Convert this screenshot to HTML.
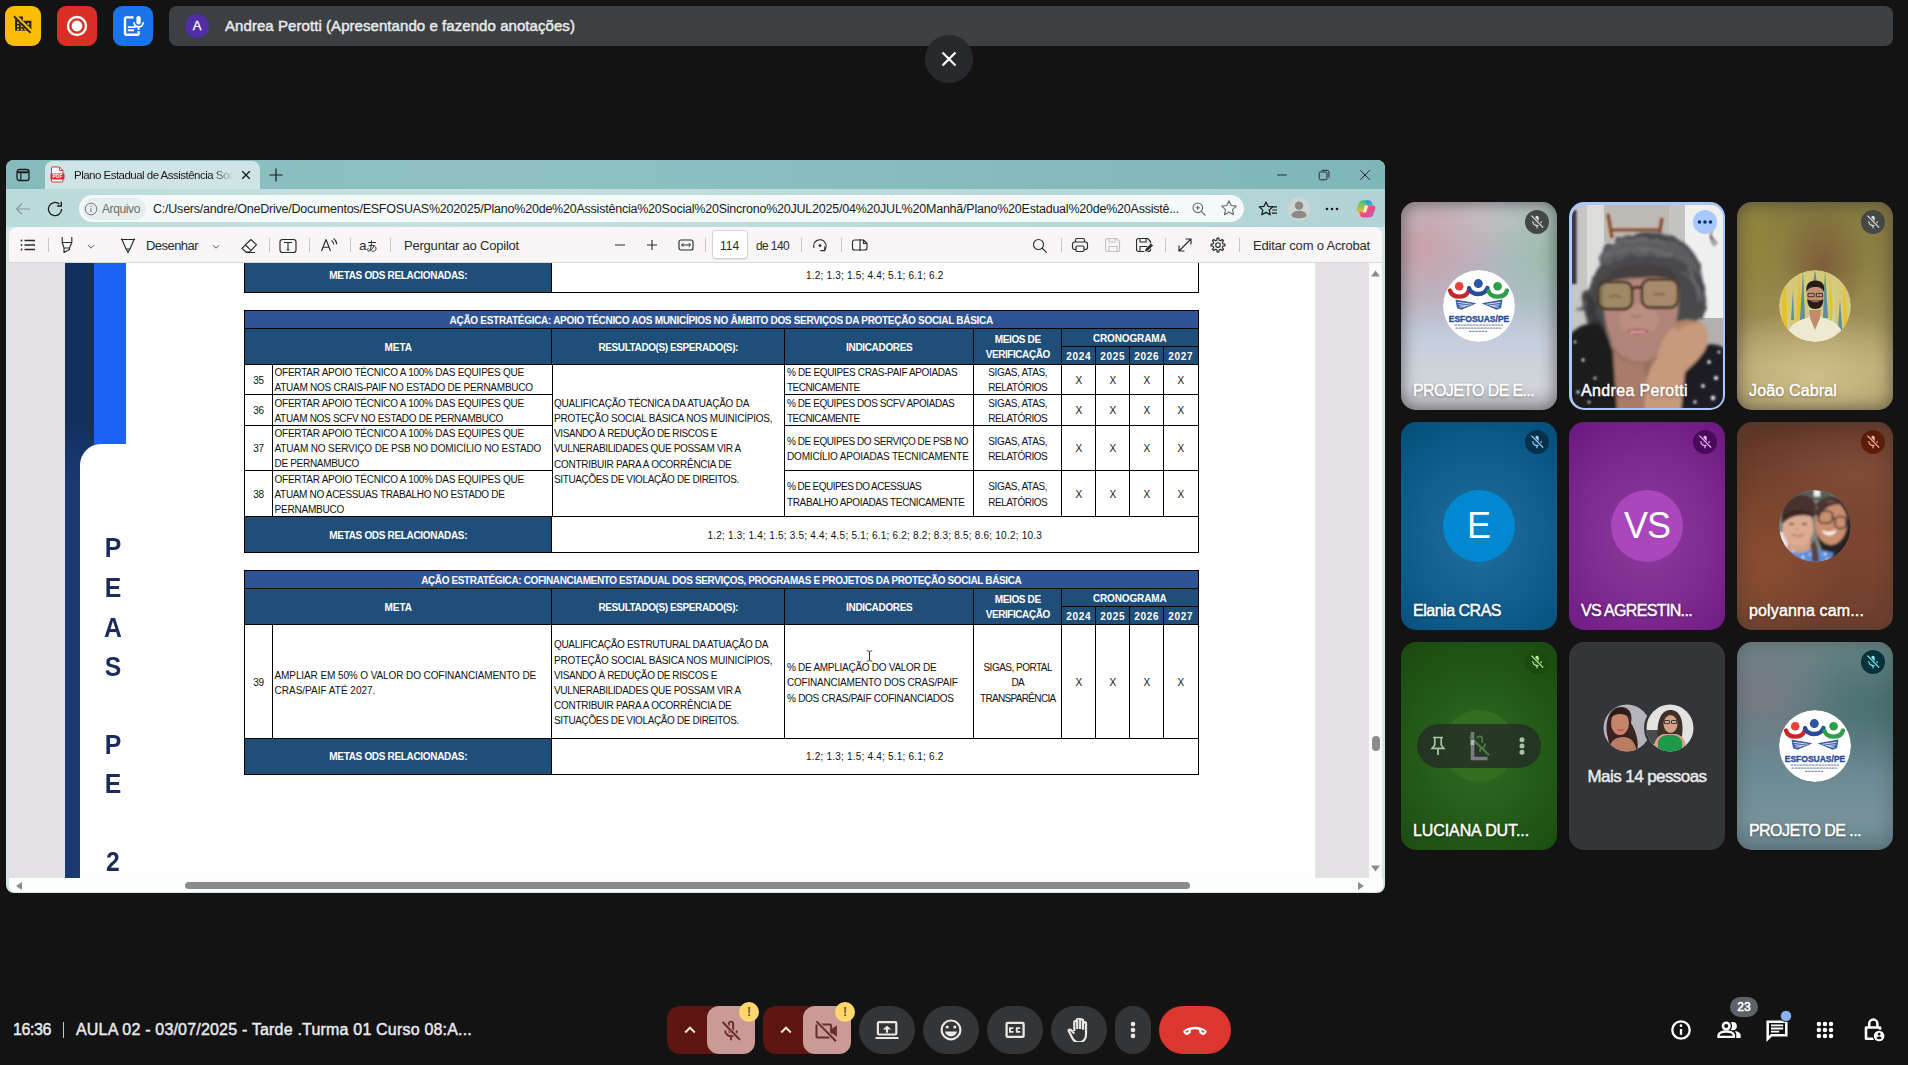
<!DOCTYPE html>
<html lang="pt-BR">
<head>
<meta charset="utf-8">
<title>Meet</title>
<style>
*{box-sizing:border-box;margin:0;padding:0}
html,body{width:1908px;height:1065px;overflow:hidden;background:#131314;font-family:"Liberation Sans",sans-serif;}
.abs{position:absolute}
.nw{white-space:nowrap}
/* ---------- top bar ---------- */
.sq{position:absolute;top:6px;height:40px;border-radius:9px}
#banner{position:absolute;left:169px;top:6px;width:1724px;height:40px;border-radius:8px;background:#3c4043}
#banner .av{position:absolute;left:16px;top:8px;width:24px;height:24px;border-radius:50%;background:#512da8;color:#fff;font-size:13px;font-weight:400;-webkit-text-stroke:.3px #fff;text-align:center;line-height:24.5px}
#banner .t{position:absolute;left:56px;top:0;line-height:40px;color:#e8eaed;font-weight:400;-webkit-text-stroke:.45px #e8eaed;font-size:15px;letter-spacing:0.063px;white-space:nowrap}
#closebtn{position:absolute;left:925px;top:35px;width:48px;height:48px;border-radius:50%;background:#28292c}
/* ---------- browser window ---------- */
#win{position:absolute;left:6px;top:160px;width:1379px;height:733px;border-radius:8px;overflow:hidden;background:#d2e8e5}
#tabstrip{position:absolute;left:0;top:0;width:1379px;height:30px;background:linear-gradient(90deg,#86babd 0%,#8fc1c2 35%,#7fb6ba 100%)}
#tab{position:absolute;left:39px;top:1px;width:215px;height:29px;border-radius:8px 8px 0 0;background:#cfe4e4}
#addr{position:absolute;left:0;top:29px;width:1379px;height:38px;background:linear-gradient(90deg,#bcdadb 0%,#c6e0e0 30%,#b1d3d6 100%)}
#pill{position:absolute;left:73px;top:6px;width:1165px;height:27px;border-radius:14px;background:#f4fafa}
#ptool{position:absolute;left:3px;top:67px;width:1373px;height:36px;background:#f8f6f6;border-radius:8px 8px 0 0;border-bottom:1px solid #d9d9d9}
#pdf{position:absolute;left:3px;top:103px;width:1373px;height:615px;background:#e4e2e4;overflow:hidden}
#page{position:absolute;left:56px;top:0;width:1250px;height:615px;background:#fefefe}
#hsb{position:absolute;left:2.500px;top:718px;width:1374px;height:13.500px;background:#fcfdfd;border-radius:0 0 6px 6px}
/* ---------- table ---------- */
  .c{position:absolute;border:1px solid #000;font-size:10px;color:#111;line-height:15.2px;display:flex;align-items:center;padding:1px 2px 0 2px;white-space:nowrap;background:#fff}
.c.ctr{justify-content:center;text-align:center}
.h{background:#1f4e79;color:#fff;font-weight:700;justify-content:center;text-align:center}
.h2{background:#2f5496;color:#fff;font-weight:700;justify-content:center;text-align:center}
.ltr{left:27.5px;width:40px;text-align:center;font-size:27.5px;font-weight:700;color:#1b2b5e;line-height:34px;transform:scaleX(.9)}
/* ---------- tiles ---------- */
.tile{position:absolute;width:156px;height:208px;border-radius:15px;overflow:hidden}
.gs{-webkit-text-stroke:.45px currentColor}
.tile .nm{position:absolute;left:12px;top:177px;line-height:24px;font-size:16px;font-weight:400;-webkit-text-stroke:.45px #fff;color:#fff;white-space:nowrap;text-shadow:0 1px 3px rgba(0,0,0,.5)}
.vig{position:absolute;left:0;top:0;right:0;bottom:0;border-radius:15px;box-shadow:inset 0 0 14px 3px rgba(60,60,60,.55)}
.mic{position:absolute;right:8px;top:8px;width:24px;height:24px;border-radius:50%}
.avc{position:absolute;left:42px;top:68px;width:72px;height:72px;border-radius:50%;overflow:hidden}
/* ---------- bottom bar ---------- */
.bb{position:absolute;top:1006px;height:48px;border-radius:24px;background:#333537}
.bt{position:absolute;top:1018px;line-height:24px;font-size:16px;font-weight:400;color:#e8eaed;white-space:nowrap}
</style>
</head>
<body>
<!-- TOPBAR -->
<div id="topbar">
<div class="sq" style="left:5px;width:36px;background:#fbbc04"></div>
<div class="sq" style="left:57px;width:40px;background:#d93025"></div>
<div class="sq" style="left:113px;width:40px;background:#1a73e8"></div>
<div id="banner"><div class="av">A</div><div class="t">Andrea Perotti (Apresentando e fazendo anotações)</div></div>
<div id="closebtn"><svg width="48" height="48" viewBox="0 0 48 48"><path d="M17.500 17.500l13 13M30.500 17.500l-13 13" stroke="#fff" stroke-width="2.200"/></svg>
</div>
<svg class="abs" style="left:5px;top:6px" width="36" height="40" viewBox="0 0 36 40">
<path d="M10.100 10.400h7.800v4.350h8.500v10.050h-16.300z" fill="#202124"/>
<g fill="#fbbc04"><rect x="12" y="15.900" width="1.900" height="1.900"/><rect x="12" y="19.300" width="1.900" height="1.900"/><rect x="12" y="22.600" width="1.900" height="1.700"/><rect x="15.700" y="19.300" width="1.900" height="1.900"/><rect x="15.700" y="22.600" width="1.900" height="1.700"/><rect x="19.400" y="22.600" width="1.900" height="1.700"/><rect x="22.300" y="16.900" width="1.900" height="1.900"/><rect x="22.600" y="20.300" width="1.800" height="1.800"/></g>
<path d="M9.600 9.400L27 27" stroke="#fbbc04" stroke-width="4"/>
<path d="M9 10.300L25.600 26.800" stroke="#202124" stroke-width="1.900"/>
</svg>
<svg class="abs" style="left:57px;top:6px" width="40" height="40" viewBox="0 0 40 40">
<circle cx="20" cy="20" r="9" fill="none" stroke="#fff" stroke-width="2.300"/><circle cx="20" cy="20" r="5.400" fill="#fff"/>
</svg>
<svg class="abs" style="left:113px;top:6px" width="40" height="40" viewBox="0 0 40 40" fill="none" stroke="#fff">
<path d="M20.500 11.400h-7.200a1.300 1.300 0 0 0-1.300 1.300v14.800a1.300 1.300 0 0 0 1.300 1.300h11a1.300 1.300 0 0 0 1.300-1.300v-2.200" stroke-width="2.400"/>
<path d="M14.800 21.100h8M14.800 24.300h6.200" stroke-width="1.900"/>
<rect x="23.400" y="10" width="4.300" height="8.600" rx="2.150" fill="#fff" stroke="none"/>
<path d="M20.900 16.300a4.650 4.650 0 0 0 9.300 0M25.550 21v3" stroke-width="1.800"/>
</svg>

</div>
<!-- WINDOW -->
<div id="win">
<div id="tabstrip"><div id="tab"><svg class="abs" style="left:5.1px;top:5.0px" width="15" height="17" viewBox="0 0 15 17" fill="none" ><path d="M2.500 1h7l3.500 3.500v10.500a1 1 0 0 1-1 1h-9.500a1 1 0 0 1-1-1v-13a1 1 0 0 1 1-1z" fill="#fff" stroke="#b33" stroke-width="0.900"/><path d="M9.500 1v3.500h3.500" stroke="#b33" stroke-width="0.900"/><rect x="0.500" y="7.500" width="14" height="6" rx="1" fill="#e5252a"/><text x="7.500" y="12.300" font-family="Liberation Sans" font-weight="700" font-size="5" fill="#fff" text-anchor="middle">PDF</text></svg>
<div class="abs nw" style="left:29.0px;top:5.7px;line-height:17.2px;font-size:11.5px;color:#1b1b1b;font-weight:400;letter-spacing:-0.518px;-webkit-mask-image:linear-gradient(90deg,#000 86%,transparent 100%);">Plano Estadual de Assistência Soc</div>
<svg class="abs" style="left:196.0px;top:9.0px" width="10" height="10" viewBox="0 0 10 10" fill="none" ><path d="M1.200 1.200l7.600 7.600M8.800 1.200l-7.600 7.600" stroke="#1b1b1b" stroke-width="1.300"/></svg>
</div><svg class="abs" style="left:8.7px;top:6.6px" width="16" height="16" viewBox="0 0 16 16" fill="none" ><rect x="2" y="2.500" width="12" height="11" rx="2.200" stroke="#1b1b1b" stroke-width="1.300"/><path d="M2.500 5.200h11" stroke="#1b1b1b" stroke-width="2"/><path d="M5.800 5.500v7.500" stroke="#1b1b1b" stroke-width="1.100"/></svg>
<svg class="abs" style="left:262.0px;top:7.0px" width="16" height="16" viewBox="0 0 16 16" fill="none" ><path d="M8 1.500v13M1.500 8h13" stroke="#1b1b1b" stroke-width="1.200"/></svg>
<svg class="abs" style="left:1269.0px;top:7.6px" width="14" height="14" viewBox="0 0 14 14" fill="none" ><path d="M2.200 7h9.600" stroke="#2a2a2a" stroke-width="1"/></svg>
<svg class="abs" style="left:1310.6px;top:8.3px" width="14" height="14" viewBox="0 0 14 14" fill="none" ><rect x="2.200" y="4" width="7.800" height="7.800" rx="1.200" stroke="#2a2a2a" stroke-width="1"/><path d="M4.500 2.300h5.500a2 2 0 0 1 2 2v5.500" stroke="#2a2a2a" stroke-width="1"/></svg>
<svg class="abs" style="left:1352.3px;top:8.3px" width="14" height="14" viewBox="0 0 14 14" fill="none" ><path d="M2.200 2.200l9.600 9.600M11.800 2.200l-9.600 9.600" stroke="#2a2a2a" stroke-width="1"/></svg>
</div>
<div id="addr"><div id="pill"><div class="abs" style="left:4px;top:2.5px;width:63px;height:22px;border-radius:11px;background:#e6efef"></div>
<svg class="abs" style="left:5.0px;top:6.8px" width="14" height="14" viewBox="0 0 14 14" fill="none" ><circle cx="7" cy="7" r="5.800" stroke="#7b7b7b" stroke-width="1"/><path d="M7 6.200v4" stroke="#7b7b7b" stroke-width="1.100"/><circle cx="7" cy="4.300" r=".7" fill="#7b7b7b"/></svg>
<div class="abs nw" style="left:23.0px;top:5.3px;line-height:18.0px;font-size:12px;color:#6e6e6e;font-weight:400;letter-spacing:-0.384px;">Arquivo</div>
<div class="abs nw" style="left:74.0px;top:4.9px;line-height:18.8px;font-size:12.5px;color:#1b1b1b;font-weight:400;letter-spacing:-0.223px;">C:/Users/andre/OneDrive/Documentos/ESFOSUAS%202025/Plano%20de%20Assistência%20Social%20Sincrono%20JUL2025/04%20JUL%20Manhã/Plano%20Estadual%20de%20Assistê...</div>
<svg class="abs" style="left:1112.0px;top:5.5px" width="16" height="16" viewBox="0 0 16 16" fill="none" ><circle cx="6.800" cy="6.800" r="4.800" stroke="#6a6a6a" stroke-width="1.100"/><path d="M10.300 10.300l4.200 4.200M4.600 6.800h4.400M6.800 4.600v4.400" stroke="#6a6a6a" stroke-width="1.100"/></svg>
<svg class="abs" style="left:1140.5px;top:4.3px" width="18" height="18" viewBox="0 0 18 18" fill="none" ><path d="M9 1.800l2.200 4.700 5.100.600-3.800 3.500 1 5.100-4.500-2.600-4.500 2.600 1-5.100-3.800-3.500 5.100-.600z" stroke="#6a6a6a" stroke-width="1.100" stroke-linejoin="round"/></svg>
</div><svg class="abs" style="left:7.5px;top:10.5px" width="18" height="18" viewBox="0 0 18 18" fill="none" ><path d="M16 9h-13.500M8 3.500l-5.500 5.500 5.500 5.500" stroke="#8a9a9c" stroke-width="1.200"/></svg>
<svg class="abs" style="left:40.0px;top:10.5px" width="18" height="18" viewBox="0 0 18 18" fill="none" ><path d="M15.600 9a6.600 6.600 0 1 1-2.200-4.900" stroke="#1b1b1b" stroke-width="1.300"/><path d="M15.300 1.800v4.200h-4.200" stroke="#1b1b1b" stroke-width="1.300"/></svg>
<svg class="abs" style="left:1251.5px;top:9.5px" width="20" height="20" viewBox="0 0 20 20" fill="none" ><path d="M8 3l2 4.300 4.700.600-3.500 3.200 1 4.700-4.200-2.400-4.200 2.400 1-4.700-3.500-3.200 4.700-.600z" stroke="#1b1b1b" stroke-width="1.250" stroke-linejoin="round"/><path d="M13.500 7.800h5.500M14.300 11h4.700M13.800 14.200h5.200" stroke="#1b1b1b" stroke-width="1.200"/></svg>
<svg class="abs" style="left:1281.4px;top:8.0px" width="24" height="24" viewBox="0 0 24 24" fill="none" ><circle cx="12" cy="12" r="11.500" fill="#cbd6d5"/><circle cx="12" cy="8.600" r="4.200" fill="#8d8984"/><path d="M4.500 18.500c0-3.200 3.200-4.800 7.500-4.800s7.500 1.600 7.500 4.800c0 1.600-3.200 2.700-7.500 2.700s-7.500-1.100-7.500-2.700z" fill="#8d8984"/></svg>
<svg class="abs" style="left:1317.7px;top:16.8px" width="16" height="6" viewBox="0 0 16 6" fill="none" ><circle cx="3" cy="3" r="1.300" fill="#1b1b1b"/><circle cx="8" cy="3" r="1.300" fill="#1b1b1b"/><circle cx="13" cy="3" r="1.300" fill="#1b1b1b"/></svg>
<svg class="abs" style="left:1348.8px;top:8.5px" width="22" height="22" viewBox="0 0 22 22" fill="none" ><defs><linearGradient id="cg1" x1="0" y1="0" x2="1" y2="1"><stop offset="0" stop-color="#2a7df0"/><stop offset="1" stop-color="#37c6d0"/></linearGradient><linearGradient id="cg2" x1="0" y1="0" x2="0" y2="1"><stop offset="0" stop-color="#35c27a"/><stop offset="1" stop-color="#f2c230"/></linearGradient><linearGradient id="cg3" x1="0" y1="0" x2="1" y2="1"><stop offset="0" stop-color="#f59a3a"/><stop offset="0.500" stop-color="#ef4a73"/><stop offset="1" stop-color="#b45ff0"/></linearGradient></defs>
<path d="M7.500 2.500h6.500c1.500 0 2.500 1 3 2.500l1 3.500h-4l-2 6h-8c-2 0-2.800-1.500-2.200-3.500l2.200-6c.6-1.600 1.800-2.500 3.500-2.500z" fill="url(#cg2)"/>
<path d="M8 2.500h6c1.500 0 2.600 1 3 2.500l1 3.500h-5.500l-1.500-3.500c-.5-1.500-1.500-2.500-3-2.500z" fill="url(#cg1)"/>
<path d="M14.500 19.500h-6.500c-1.500 0-2.500-1-3-2.500l-1-3.500h4l2-6h8c2 0 2.800 1.500 2.200 3.500l-2.200 6c-.6 1.600-1.800 2.500-3.500 2.500z" fill="url(#cg3)"/>
<path d="M9.800 7.500h3.400l-2 7h-3.400z" fill="#fff" opacity=".85"/></svg>
</div>
<div id="ptool"><svg class="abs" style="left:11.4px;top:11.0px" width="16" height="14" viewBox="0 0 16 14" fill="none" ><path d="M4.500 2.500h10.500M4.500 7h10.500M4.500 11.500h10.500" stroke="#2b2b2b" stroke-width="1.300"/><circle cx="1.500" cy="2.500" r=".9" fill="#2b2b2b"/><circle cx="1.500" cy="7" r=".9" fill="#2b2b2b"/><circle cx="1.500" cy="11.500" r=".9" fill="#2b2b2b"/></svg>
<div class="abs" style="left:39.3px;top:11px;width:1px;height:14px;background:#c9c7c7"></div>
<svg class="abs" style="left:50.0px;top:9.0px" width="16" height="18" viewBox="0 0 16 18" fill="none" ><path d="M3.200 1v5.500l1.800 5.500v4.500l5.500-3v-1.500l2.300-5.500v-5.500M3.200 6.500h9.600M5 12h5.500" stroke="#2b2b2b" stroke-width="1.150" stroke-linejoin="round"/></svg>
<svg class="abs" style="left:77.6px;top:16.5px" width="8" height="6" viewBox="0 0 8 6" fill="none" ><path d="M1 1.200l3 3 3-3" stroke="#555" stroke-width="1"/></svg>
<svg class="abs" style="left:110.5px;top:9.0px" width="16" height="18" viewBox="0 0 16 18" fill="none" ><path d="M1.500 2.500l4.500 10.500h4l4.500-10.500M1 3.500h14M6.200 13h3.600l-1.800 3.500z" stroke="#2b2b2b" stroke-width="1.150" stroke-linejoin="round"/></svg>
<div class="abs nw" style="left:137.0px;top:9.1px;line-height:19.5px;font-size:13px;color:#2b2b2b;font-weight:400;letter-spacing:-0.547px;">Desenhar</div>
<svg class="abs" style="left:203.0px;top:16.5px" width="8" height="6" viewBox="0 0 8 6" fill="none" ><path d="M1 1.200l3 3 3-3" stroke="#555" stroke-width="1"/></svg>
<svg class="abs" style="left:230.5px;top:10.5px" width="18" height="16" viewBox="0 0 18 16" fill="none" ><path d="M10.800 1.500l5.700 5.200-7 7.300h-3.600l-3.900-3.700z" stroke="#2b2b2b" stroke-width="1.150" stroke-linejoin="round"/><path d="M5.500 7l5 4.800M6 14.500h9" stroke="#2b2b2b" stroke-width="1.150"/></svg>
<div class="abs" style="left:259.7px;top:11px;width:1px;height:14px;background:#c9c7c7"></div>
<svg class="abs" style="left:270.0px;top:10.5px" width="18" height="16" viewBox="0 0 18 16" fill="none" ><rect x="1" y="1.500" width="16" height="13" rx="2.500" stroke="#2b2b2b" stroke-width="1.150"/><path d="M5.500 5v-.5h7v.5M9 4.500v7.500M7.500 12h3" stroke="#2b2b2b" stroke-width="1.100"/></svg>
<div class="abs" style="left:300.0px;top:11px;width:1px;height:14px;background:#c9c7c7"></div>
<svg class="abs" style="left:311.0px;top:10.0px" width="18" height="16" viewBox="0 0 18 16" fill="none" ><path d="M1.500 14l4.500-11.500 4.500 11.500M3 10.200h6" stroke="#2b2b2b" stroke-width="1.150" stroke-linejoin="round"/><path d="M11.500 3.500a5 5 0 0 1 2.200 4M13.500 1.500a8 8 0 0 1 3.300 5.800" stroke="#2b2b2b" stroke-width="1.100"/></svg>
<div class="abs" style="left:340.7px;top:11px;width:1px;height:14px;background:#c9c7c7"></div>
<div class="abs nw" style="left:350px;top:9.5px;font-size:13.5px;line-height:18px;color:#2b2b2b">a</div>
<svg class="abs" style="left:355.5px;top:12.0px" width="14" height="14" viewBox="0 0 14 14" fill="none" ><path d="M3 3.500h8M6.500 1.500c0 4-.5 7.500-1.500 10M3.500 7c3.500-1.500 7.500-.5 7.500 2.500s-3 3-4.500 2.500M9 6c-.5 3-2.500 5-5 6c-1.500.5-2-1.500-.5-3" stroke="#2b2b2b" stroke-width="1"/></svg>
<div class="abs" style="left:381.0px;top:11px;width:1px;height:14px;background:#c9c7c7"></div>
<div class="abs nw" style="left:395.0px;top:9.1px;line-height:19.5px;font-size:13px;color:#2b2b2b;font-weight:400;letter-spacing:-0.212px;">Perguntar ao Copilot</div>
<svg class="abs" style="left:605.0px;top:12.0px" width="12" height="12" viewBox="0 0 12 12" fill="none" ><path d="M1 6h10" stroke="#2b2b2b" stroke-width="1.100"/></svg>
<svg class="abs" style="left:637.0px;top:12.0px" width="12" height="12" viewBox="0 0 12 12" fill="none" ><path d="M1 6h10M6 1v10" stroke="#2b2b2b" stroke-width="1.100"/></svg>
<svg class="abs" style="left:669.0px;top:12.3px" width="16" height="12" viewBox="0 0 16 12" fill="none" ><rect x="1" y="1" width="14" height="10" rx="2" stroke="#2b2b2b" stroke-width="1.150"/><path d="M3.500 6h9M5.300 4.200l-1.800 1.800 1.800 1.800M10.700 4.200l1.800 1.800-1.800 1.800" stroke="#2b2b2b" stroke-width="1"/></svg>
<div class="abs" style="left:702.5px;top:2.500px;width:36px;height:29.500px;border:1px solid #d6d3d3;border-radius:4px;background:#fff;box-shadow:0 1px 1px rgba(0,0,0,.08);font-size:12px;line-height:30px;text-align:center;color:#2b2b2b">114</div>
<div class="abs nw" style="left:747.0px;top:9.8px;line-height:18.0px;font-size:12px;color:#2b2b2b;font-weight:400;letter-spacing:-0.617px;">de 140</div>
<div class="abs" style="left:696.0px;top:11px;width:1px;height:14px;background:#c9c7c7"></div>
<div class="abs" style="left:792.0px;top:11px;width:1px;height:14px;background:#c9c7c7"></div>
<svg class="abs" style="left:802.0px;top:9.5px" width="18" height="18" viewBox="0 0 18 18" fill="none" ><path d="M3 10.800A6.200 6.200 0 1 1 13.300 13.300" stroke="#2b2b2b" stroke-width="1.150"/><path d="M13.800 9.200v4.400h-4.400" stroke="#2b2b2b" stroke-width="1.150" stroke-linejoin="round"/><circle cx="9" cy="8.600" r="1.400" fill="#2b2b2b"/></svg>
<div class="abs" style="left:831.5px;top:11px;width:1px;height:14px;background:#c9c7c7"></div>
<svg class="abs" style="left:842.0px;top:11.3px" width="18" height="14" viewBox="0 0 18 14" fill="none" ><path d="M9 2h-5.500a2 2 0 0 0-2 2v6a2 2 0 0 0 2 2h5.500M9 1v12" stroke="#2b2b2b" stroke-width="1.150"/><path d="M9 2h3.500l3.500 3.500v4.500a2 2 0 0 1-2 2h-5M12.500 2v3.500h3.500" stroke="#2b2b2b" stroke-width="1.150" stroke-linejoin="round"/></svg>
<svg class="abs" style="left:1023.0px;top:10.5px" width="16" height="16" viewBox="0 0 16 16" fill="none" ><circle cx="6.500" cy="6.500" r="5" stroke="#2b2b2b" stroke-width="1.150"/><path d="M10.200 10.200l4.500 4.500" stroke="#2b2b2b" stroke-width="1.200"/></svg>
<div class="abs" style="left:1051.6px;top:11px;width:1px;height:14px;background:#c9c7c7"></div>
<svg class="abs" style="left:1062.4px;top:10.3px" width="18" height="16" viewBox="0 0 18 16" fill="none" ><path d="M4.500 5v-2a1.500 1.500 0 0 1 1.500-1.500h6a1.500 1.500 0 0 1 1.500 1.500v2" stroke="#2b2b2b" stroke-width="1.200"/><rect x="1.500" y="5" width="15" height="7.500" rx="2.200" stroke="#2b2b2b" stroke-width="1.200"/><rect x="5" y="9" width="8" height="5.500" rx="1.200" fill="#f8f6f6" stroke="#2b2b2b" stroke-width="1.200"/></svg>
<svg class="abs" style="left:1095.7px;top:10.3px" width="16" height="16" viewBox="0 0 16 16" fill="none" ><path d="M2.500 1.500h9l3 3v8a2 2 0 0 1-2 2h-10a2 2 0 0 1-2-2v-9a2 2 0 0 1 2-2z" stroke="#c4c2c2" stroke-width="1.200" stroke-linejoin="round"/><path d="M4 1.500v3.500h6v-3.500M4 14.500v-5h8v5" stroke="#c4c2c2" stroke-width="1.100"/></svg>
<svg class="abs" style="left:1127.0px;top:10.3px" width="18" height="16" viewBox="0 0 18 16" fill="none" ><path d="M2.500 1.500h9l3 3v8a2 2 0 0 1-2 2h-10a2 2 0 0 1-2-2v-9a2 2 0 0 1 2-2z" stroke="#2b2b2b" stroke-width="1.200" stroke-linejoin="round"/><path d="M4 1.500v3.500h6v-3.500M4 14.500v-5h8v5" stroke="#2b2b2b" stroke-width="1.100"/><path d="M8.500 15l.7-3 5.800-5.800 2.300 2.300-5.800 5.800z" fill="#2b2b2b" stroke="#f8f6f6" stroke-width=".8"/></svg>
<div class="abs" style="left:1156.0px;top:11px;width:1px;height:14px;background:#c9c7c7"></div>
<svg class="abs" style="left:1168.0px;top:10.3px" width="16" height="16" viewBox="0 0 16 16" fill="none" ><path d="M2 14l12-12M8.500 2h5.500v5.500M7.500 14h-5.500v-5.500" stroke="#2b2b2b" stroke-width="1.150"/></svg>
<svg class="abs" style="left:1199.6px;top:9.0px" width="18" height="18" viewBox="0 0 18 18" fill="none" ><path d="M7.83 4.14L8.07 2.06L9.93 2.06L10.17 4.14L11.61 4.74L13.25 3.44L14.56 4.75L13.26 6.39L13.86 7.83L15.94 8.07L15.94 9.93L13.86 10.17L13.26 11.61L14.56 13.25L13.25 14.56L11.61 13.26L10.17 13.86L9.93 15.94L8.07 15.94L7.83 13.86L6.39 13.26L4.75 14.56L3.44 13.25L4.74 11.61L4.14 10.17L2.06 9.93L2.06 8.07L4.14 7.83L4.74 6.39L3.44 4.75L4.75 3.44L6.39 4.74z" stroke="#2b2b2b" stroke-width="1.150" stroke-linejoin="round"/><circle cx="9" cy="9" r="2.300" stroke="#2b2b2b" stroke-width="1.150"/></svg>
<div class="abs" style="left:1229.5px;top:11px;width:1px;height:14px;background:#c9c7c7"></div>
<div class="abs nw" style="left:1244.0px;top:9.1px;line-height:19.5px;font-size:13px;color:#2b2b2b;font-weight:400;letter-spacing:-0.184px;">Editar com o Acrobat</div>
</div>
<div id="pdf"><div id="page">
<div class="abs" style="left:0;top:0;width:29px;height:181px;background:#12305e"></div>
<div class="abs" style="left:0;top:181px;width:16px;height:434px;background:#1b3a73"></div>
<div class="abs" style="left:0;top:160px;width:40px;height:60px;background:linear-gradient(180deg,#12305e,#1b3a73)"></div>
<div class="abs" style="left:29px;top:0;width:32px;height:182px;background:#1d62f7"></div>
<div class="abs" style="left:15px;top:181px;width:200px;height:434px;background:#fefefe;border-radius:21px 0 0 0"></div>
<div class="abs ltr" style="top:268px">P</div>
<div class="abs ltr" style="top:308px">E</div>
<div class="abs ltr" style="top:348px">A</div>
<div class="abs ltr" style="top:387px">S</div>
<div class="abs ltr" style="top:465px">P</div>
<div class="abs ltr" style="top:504px">E</div>
<div class="abs ltr" style="top:582px">2</div>
<div class="c h" style="left:179.0px;top:-8.7px;width:308.5px;height:39.0px;align-items:flex-start;padding-top:12.5px"><div><span style="letter-spacing:-0.325px">METAS ODS RELACIONADAS:</span></div></div>
<div class="c ctr" style="left:486.0px;top:-8.7px;width:647.5px;height:39.0px;align-items:flex-start;padding-top:12.5px"><div><span style="letter-spacing:0.207px">1.2; 1.3; 1.5; 4.4; 5.1; 6.1; 6.2</span></div></div>
<div class="c h2" style="left:179.0px;top:47.3px;width:954.5px;height:19.5px;"><div><span style="letter-spacing:-0.297px">AÇÃO ESTRATÉGICA: APOIO TÉCNICO AOS MUNICÍPIOS NO ÂMBITO DOS SERVIÇOS DA PROTEÇÃO SOCIAL BÁSICA</span></div></div>
<div class="c h" style="left:179.0px;top:65.3px;width:308.5px;height:37.0px;"><div><span style="letter-spacing:-0.023px">META</span></div></div>
<div class="c h" style="left:486.0px;top:65.3px;width:234.5px;height:37.0px;"><div><span style="letter-spacing:-0.406px">RESULTADO(S) ESPERADO(S):</span></div></div>
<div class="c h" style="left:719.0px;top:65.3px;width:190.5px;height:37.0px;"><div><span style="letter-spacing:-0.329px">INDICADORES</span></div></div>
<div class="c h" style="left:908.0px;top:65.3px;width:89.5px;height:37.0px;"><div><span style="letter-spacing:-0.338px">MEIOS DE</span><br><span style="letter-spacing:-0.428px">VERIFICAÇÃO</span></div></div>
<div class="c h" style="left:996.0px;top:65.3px;width:137.5px;height:19.5px;"><div><span style="letter-spacing:-0.13px">CRONOGRAMA</span></div></div>
<div class="c h" style="left:996.0px;top:83.3px;width:35.5px;height:19.0px;"><div><span style="letter-spacing:0.688px">2024</span></div></div>
<div class="c h" style="left:1030.0px;top:83.3px;width:35.5px;height:19.0px;"><div><span style="letter-spacing:0.688px">2025</span></div></div>
<div class="c h" style="left:1064.0px;top:83.3px;width:35.5px;height:19.0px;"><div><span style="letter-spacing:0.688px">2026</span></div></div>
<div class="c h" style="left:1098.0px;top:83.3px;width:35.5px;height:19.0px;"><div><span style="letter-spacing:0.688px">2027</span></div></div>
<div class="c " style="left:486.0px;top:100.8px;width:234.5px;height:154.0px;"><div><span style="letter-spacing:-0.233px">QUALIFICAÇÃO TÉCNICA DA ATUAÇÃO DA</span><br><span style="letter-spacing:-0.204px">PROTEÇÃO SOCIAL BÁSICA NOS MUINICÍPIOS,</span><br><span style="letter-spacing:-0.396px">VISANDO À REDUÇÃO DE RISCOS E</span><br><span style="letter-spacing:-0.335px">VULNERABILIDADES QUE POSSAM VIR A</span><br><span style="letter-spacing:-0.273px">CONTRIBUIR PARA A OCORRÊNCIA DE</span><br><span style="letter-spacing:-0.375px">SITUAÇÕES DE VIOLAÇÃO DE DIREITOS.</span></div></div>
<div class="c ctr" style="left:179.0px;top:100.8px;width:29.0px;height:32.0px;"><div><span style="letter-spacing:-0.312px">35</span></div></div>
<div class="c " style="left:206.5px;top:100.8px;width:281.0px;height:32.0px;"><div><span style="letter-spacing:-0.243px">OFERTAR APOIO TÉCNICO A 100% DAS EQUIPES QUE</span><br><span style="letter-spacing:-0.241px">ATUAM NOS CRAIS-PAIF NO ESTADO DE PERNAMBUCO</span></div></div>
<div class="c " style="left:719.0px;top:100.8px;width:190.5px;height:32.0px;"><div><span style="letter-spacing:-0.366px">% DE EQUIPES CRAS-PAIF APOIADAS</span><br><span style="letter-spacing:-0.526px">TECNICAMENTE</span></div></div>
<div class="c ctr" style="left:908.0px;top:100.8px;width:89.5px;height:32.0px;"><div><span style="letter-spacing:-0.332px">SIGAS, ATAS,</span><br><span style="letter-spacing:-0.472px">RELATÓRIOS</span></div></div>
<div class="c ctr" style="left:996.0px;top:100.8px;width:35.5px;height:32.0px;"><div>X</div></div>
<div class="c ctr" style="left:1030.0px;top:100.8px;width:35.5px;height:32.0px;"><div>X</div></div>
<div class="c ctr" style="left:1064.0px;top:100.8px;width:35.5px;height:32.0px;"><div>X</div></div>
<div class="c ctr" style="left:1098.0px;top:100.8px;width:35.5px;height:32.0px;"><div>X</div></div>
<div class="c ctr" style="left:179.0px;top:131.3px;width:29.0px;height:32.0px;"><div><span style="letter-spacing:-0.312px">36</span></div></div>
<div class="c " style="left:206.5px;top:131.3px;width:281.0px;height:32.0px;"><div><span style="letter-spacing:-0.243px">OFERTAR APOIO TÉCNICO A 100% DAS EQUIPES QUE</span><br><span style="letter-spacing:-0.306px">ATUAM NOS SCFV NO ESTADO DE PERNAMBUCO</span></div></div>
<div class="c " style="left:719.0px;top:131.3px;width:190.5px;height:32.0px;"><div><span style="letter-spacing:-0.429px">% DE EQUIPES DOS SCFV APOIADAS</span><br><span style="letter-spacing:-0.526px">TECNICAMENTE</span></div></div>
<div class="c ctr" style="left:908.0px;top:131.3px;width:89.5px;height:32.0px;"><div><span style="letter-spacing:-0.332px">SIGAS, ATAS,</span><br><span style="letter-spacing:-0.472px">RELATÓRIOS</span></div></div>
<div class="c ctr" style="left:996.0px;top:131.3px;width:35.5px;height:32.0px;"><div>X</div></div>
<div class="c ctr" style="left:1030.0px;top:131.3px;width:35.5px;height:32.0px;"><div>X</div></div>
<div class="c ctr" style="left:1064.0px;top:131.3px;width:35.5px;height:32.0px;"><div>X</div></div>
<div class="c ctr" style="left:1098.0px;top:131.3px;width:35.5px;height:32.0px;"><div>X</div></div>
<div class="c ctr" style="left:179.0px;top:161.8px;width:29.0px;height:47.0px;"><div><span style="letter-spacing:-0.312px">37</span></div></div>
<div class="c " style="left:206.5px;top:161.8px;width:281.0px;height:47.0px;"><div><span style="letter-spacing:-0.243px">OFERTAR APOIO TÉCNICO A 100% DAS EQUIPES QUE</span><br><span style="letter-spacing:-0.133px">ATUAM NO SERVIÇO DE PSB NO DOMICÍLIO NO ESTADO</span><br><span style="letter-spacing:-0.305px">DE PERNAMBUCO</span></div></div>
<div class="c " style="left:719.0px;top:161.8px;width:190.5px;height:47.0px;"><div><span style="letter-spacing:-0.431px">% DE EQUIPES DO SERVIÇO DE PSB NO</span><br><span style="letter-spacing:-0.173px">DOMICÍLIO APOIADAS TECNICAMENTE</span></div></div>
<div class="c ctr" style="left:908.0px;top:161.8px;width:89.5px;height:47.0px;"><div><span style="letter-spacing:-0.332px">SIGAS, ATAS,</span><br><span style="letter-spacing:-0.472px">RELATÓRIOS</span></div></div>
<div class="c ctr" style="left:996.0px;top:161.8px;width:35.5px;height:47.0px;"><div>X</div></div>
<div class="c ctr" style="left:1030.0px;top:161.8px;width:35.5px;height:47.0px;"><div>X</div></div>
<div class="c ctr" style="left:1064.0px;top:161.8px;width:35.5px;height:47.0px;"><div>X</div></div>
<div class="c ctr" style="left:1098.0px;top:161.8px;width:35.5px;height:47.0px;"><div>X</div></div>
<div class="c ctr" style="left:179.0px;top:207.3px;width:29.0px;height:47.5px;"><div><span style="letter-spacing:-0.312px">38</span></div></div>
<div class="c " style="left:206.5px;top:207.3px;width:281.0px;height:47.5px;"><div><span style="letter-spacing:-0.243px">OFERTAR APOIO TÉCNICO A 100% DAS EQUIPES QUE</span><br><span style="letter-spacing:-0.329px">ATUAM NO ACESSUAS TRABALHO NO ESTADO DE</span><br><span style="letter-spacing:-0.199px">PERNAMBUCO</span></div></div>
<div class="c " style="left:719.0px;top:207.3px;width:190.5px;height:47.5px;"><div><span style="letter-spacing:-0.544px">% DE EQUIPES DO ACESSUAS</span><br><span style="letter-spacing:-0.375px">TRABALHO APOIADAS TECNICAMENTE</span></div></div>
<div class="c ctr" style="left:908.0px;top:207.3px;width:89.5px;height:47.5px;"><div><span style="letter-spacing:-0.332px">SIGAS, ATAS,</span><br><span style="letter-spacing:-0.472px">RELATÓRIOS</span></div></div>
<div class="c ctr" style="left:996.0px;top:207.3px;width:35.5px;height:47.5px;"><div>X</div></div>
<div class="c ctr" style="left:1030.0px;top:207.3px;width:35.5px;height:47.5px;"><div>X</div></div>
<div class="c ctr" style="left:1064.0px;top:207.3px;width:35.5px;height:47.5px;"><div>X</div></div>
<div class="c ctr" style="left:1098.0px;top:207.3px;width:35.5px;height:47.5px;"><div>X</div></div>
<div class="c h" style="left:179.0px;top:253.3px;width:308.5px;height:37.0px;"><div><span style="letter-spacing:-0.325px">METAS ODS RELACIONADAS:</span></div></div>
<div class="c ctr" style="left:486.0px;top:253.3px;width:647.5px;height:37.0px;"><div><span style="letter-spacing:0.221px">1.2; 1.3; 1.4; 1.5; 3.5; 4.4; 4.5; 5.1; 6.1; 6.2; 8.2; 8.3; 8.5; 8.6; 10.2; 10.3</span></div></div>
<div class="c h2" style="left:179.0px;top:307.3px;width:954.5px;height:19.5px;"><div><span style="letter-spacing:-0.376px">AÇÃO ESTRATÉGICA: COFINANCIAMENTO ESTADUAL DOS SERVIÇOS, PROGRAMAS E PROJETOS DA PROTEÇÃO SOCIAL BÁSICA</span></div></div>
<div class="c h" style="left:179.0px;top:325.3px;width:308.5px;height:37.0px;"><div><span style="letter-spacing:-0.023px">META</span></div></div>
<div class="c h" style="left:486.0px;top:325.3px;width:234.5px;height:37.0px;"><div><span style="letter-spacing:-0.406px">RESULTADO(S) ESPERADO(S):</span></div></div>
<div class="c h" style="left:719.0px;top:325.3px;width:190.5px;height:37.0px;"><div><span style="letter-spacing:-0.329px">INDICADORES</span></div></div>
<div class="c h" style="left:908.0px;top:325.3px;width:89.5px;height:37.0px;"><div><span style="letter-spacing:-0.338px">MEIOS DE</span><br><span style="letter-spacing:-0.428px">VERIFICAÇÃO</span></div></div>
<div class="c h" style="left:996.0px;top:325.3px;width:137.5px;height:19.5px;"><div><span style="letter-spacing:-0.13px">CRONOGRAMA</span></div></div>
<div class="c h" style="left:996.0px;top:343.3px;width:35.5px;height:19.0px;"><div><span style="letter-spacing:0.688px">2024</span></div></div>
<div class="c h" style="left:1030.0px;top:343.3px;width:35.5px;height:19.0px;"><div><span style="letter-spacing:0.688px">2025</span></div></div>
<div class="c h" style="left:1064.0px;top:343.3px;width:35.5px;height:19.0px;"><div><span style="letter-spacing:0.688px">2026</span></div></div>
<div class="c h" style="left:1098.0px;top:343.3px;width:35.5px;height:19.0px;"><div><span style="letter-spacing:0.688px">2027</span></div></div>
<div class="c ctr" style="left:179.0px;top:360.8px;width:29.0px;height:115.5px;padding-top:3px"><div><span style="letter-spacing:-0.312px">39</span></div></div>
<div class="c " style="left:206.5px;top:360.8px;width:281.0px;height:115.5px;padding-top:3px"><div><span style="letter-spacing:-0.095px">AMPLIAR EM 50% O VALOR DO COFINANCIAMENTO DE</span><br><span style="letter-spacing:0.006px">CRAS/PAIF ATÉ 2027.</span></div></div>
<div class="c " style="left:486.0px;top:360.8px;width:234.5px;height:115.5px;padding-top:3px"><div><span style="letter-spacing:-0.326px">QUALIFICAÇÃO ESTRUTURAL DA ATUAÇÃO DA</span><br><span style="letter-spacing:-0.204px">PROTEÇÃO SOCIAL BÁSICA NOS MUINICÍPIOS,</span><br><span style="letter-spacing:-0.396px">VISANDO À REDUÇÃO DE RISCOS E</span><br><span style="letter-spacing:-0.335px">VULNERABILIDADES QUE POSSAM VIR A</span><br><span style="letter-spacing:-0.273px">CONTRIBUIR PARA A OCORRÊNCIA DE</span><br><span style="letter-spacing:-0.375px">SITUAÇÕES DE VIOLAÇÃO DE DIREITOS.</span></div></div>
<div class="c " style="left:719.0px;top:360.8px;width:190.5px;height:115.5px;padding-top:3px"><div><span style="letter-spacing:-0.274px">% DE AMPLIAÇÃO DO VALOR DE</span><br><span style="letter-spacing:-0.213px">COFINANCIAMENTO DOS CRAS/PAIF</span><br><span style="letter-spacing:-0.262px">% DOS CRAS/PAIF COFINANCIADOS</span></div></div>
<div class="c ctr" style="left:908.0px;top:360.8px;width:89.5px;height:115.5px;padding-top:3px"><div><span style="letter-spacing:-0.509px">SIGAS, PORTAL</span><br><span style="letter-spacing:-0.703px">DA</span><br><span style="letter-spacing:-0.668px">TRANSPARÊNCIA</span></div></div>
<div class="c ctr" style="left:996.0px;top:360.8px;width:35.5px;height:115.5px;padding-top:3px"><div>X</div></div>
<div class="c ctr" style="left:1030.0px;top:360.8px;width:35.5px;height:115.5px;padding-top:3px"><div>X</div></div>
<div class="c ctr" style="left:1064.0px;top:360.8px;width:35.5px;height:115.5px;padding-top:3px"><div>X</div></div>
<div class="c ctr" style="left:1098.0px;top:360.8px;width:35.5px;height:115.5px;padding-top:3px"><div>X</div></div>
<div class="c h" style="left:179.0px;top:474.8px;width:308.5px;height:37.0px;"><div><span style="letter-spacing:-0.325px">METAS ODS RELACIONADAS:</span></div></div>
<div class="c ctr" style="left:486.0px;top:474.8px;width:647.5px;height:37.0px;"><div><span style="letter-spacing:0.207px">1.2; 1.3; 1.5; 4.4; 5.1; 6.1; 6.2</span></div></div>

</div><div class="abs" style="left:1360px;top:0;width:13px;height:615px;background:#fbfbfb"></div>
<svg class="abs" style="left:1360px;top:6px" width="13" height="10" viewBox="0 0 13 10"><path d="M6.500 1.500l4.500 6h-9z" fill="#8c8c8c"/></svg>
<svg class="abs" style="left:1360px;top:600px" width="13" height="10" viewBox="0 0 13 10"><path d="M6.500 8.500l4.500-6h-9z" fill="#8c8c8c"/></svg>
<div class="abs" style="left:1363px;top:473px;width:8px;height:15px;border-radius:4px;background:#8c8c8c"></div>
</div>
<div id="hsb"><svg class="abs" style="left:5.500px;top:3px" width="10" height="10" viewBox="0 0 10 10"><path d="M2 5l6-4v8z" fill="#8c8c8c"/></svg><svg class="abs" style="left:1347px;top:3px" width="10" height="10" viewBox="0 0 10 10"><path d="M8 5l-6-4v8z" fill="#8c8c8c"/></svg><div class="abs" style="left:176.500px;top:3.500px;width:1004.500px;height:7.500px;border-radius:4px;background:#8b8b8b"></div></div>
</div>
<svg class="abs" style="left:866px;top:650px" width="7" height="12" viewBox="0 0 7 12" fill="none" stroke="#333" stroke-width="1"><path d="M.8 .9c1.500 0 2.200.2 2.700.8c.5-.6 1.200-.8 2.700-.8M.8 11.100c1.500 0 2.200-.2 2.700-.8c.5.600 1.200.8 2.700.8M3.500 1.500v9"/></svg>
<!-- TILES -->
<div id="tiles">
<div class="tile" style="left:1401px;top:202px;background:radial-gradient(ellipse 60% 40% at 12% 22%,rgba(203,160,168,.95),rgba(203,160,168,0) 100%),radial-gradient(ellipse 55% 40% at 100% 25%,rgba(150,190,165,.85),rgba(150,190,165,0) 100%),radial-gradient(ellipse 80% 30% at 50% 0%,rgba(200,200,205,1),rgba(200,200,205,0) 100%),linear-gradient(180deg,#b3b7c4 0%,#b4bccd 45%,#c8cfdd 70%,#d2d4da 88%,#b9b9bd 100%)"><div class="vig"></div><div class="avc"><svg width="72" height="72" viewBox="0 0 72 72" fill="none"><circle cx="36" cy="36" r="36" fill="#fff"/>
<circle cx="16.200" cy="16.200" r="4.300" fill="#e8413c"/><circle cx="35.300" cy="13.600" r="4.500" fill="#2f55a4"/><circle cx="54.600" cy="16.200" r="4.300" fill="#2e9e48"/>
<path d="M7 20.500c2.500 8.200 15.500 8.200 18.500 .5" stroke="#c62828" stroke-width="4.300" stroke-linecap="round"/>
<path d="M26 18c2.500 8 15.500 8 18.500 0" stroke="#2a4a9a" stroke-width="4.300" stroke-linecap="round"/>
<path d="M45.500 21c3 7.700 16 7.700 18.500-.5" stroke="#2e9e48" stroke-width="4.300" stroke-linecap="round"/>
<path d="M12.500 29.500l21 3.800-15 6.500-4.500-1.500z" fill="#3d5fa8"/><path d="M14.500 32.300l14 2M15.500 34.800l10 .8M16.500 37.200l6-.8" stroke="#fff" stroke-width=".8"/>
<path d="M59.500 29.500l-21 3.800 15 6.500 4.500-1.500z" fill="#3d5fa8"/><path d="M57.500 32.300l-14 2M56.500 34.800l-10 .8M55.500 37.200l-6-.8" stroke="#fff" stroke-width=".8"/>
<text x="36" y="51.700" text-anchor="middle" font-family="Liberation Sans" font-weight="700" font-size="8.800" fill="#2a4a9a" stroke="#2a4a9a" stroke-width=".35" textLength="60.500" lengthAdjust="spacingAndGlyphs">ESFOSUAS/PE</text>
<path d="M11.500 55.200h48.500M12.500 58.200h46M26 61.300h18" stroke="#8a96b0" stroke-width="1.200" stroke-dasharray="2.600 .5"/></svg></div><div class="mic" style="background:#444746"><svg width="24" height="24" viewBox="0 0 24 24" fill="none"><rect x="10.300" y="5.800" width="3.400" height="7.400" rx="1.700" fill="#dcdcdc"/><path d="M7.800 11.300a4.200 4.200 0 0 0 8.400 0M12 15.500v2.700" stroke="#dcdcdc" stroke-width="1.250"/><path d="M5.800 5.300l12.800 13" stroke="#444746" stroke-width="3"/><path d="M6.400 5.600l11.800 12" stroke="#dcdcdc" stroke-width="1.250"/></svg></div><div class="nm" style="letter-spacing:-0.627px">PROJETO DE E...</div></div>
<div class="tile" style="left:1569px;top:202px;background:#a8c7fa"><div class="abs" style="left:2.500px;top:2.500px;width:151px;height:203px;border-radius:12.500px;overflow:hidden"><div class="abs" style="left:-2.500px;top:-2.500px"><svg class="abs" style="left:0;top:0" width="156" height="208" viewBox="0 0 156 208">
<defs><filter id="b2" x="-10%" y="-10%" width="120%" height="120%"><feGaussianBlur stdDeviation="1.800"/></filter><filter id="b1" x="-10%" y="-10%" width="120%" height="120%"><feGaussianBlur stdDeviation=".9"/></filter><filter id="b3" x="-20%" y="-20%" width="140%" height="140%"><feGaussianBlur stdDeviation="3.200"/></filter>
<filter id="rg" x="-20%" y="-20%" width="140%" height="140%"><feTurbulence type="fractalNoise" baseFrequency="0.07" numOctaves="2" seed="7"/><feDisplacementMap in="SourceGraphic" scale="11"/><feGaussianBlur stdDeviation="1.600"/></filter>
<clipPath id="cc"><rect width="156" height="208"/></clipPath></defs>
<g clip-path="url(#cc)">
<rect width="156" height="208" fill="#cfcfcd"/>
<rect x="0" y="0" width="20" height="140" fill="#c6c6c4"/><rect x="18" y="0" width="18" height="140" fill="#dcdcda"/>
<rect x="35" y="0" width="66" height="40" fill="#bdb9b3"/><rect x="100" y="0" width="17" height="70" fill="#c4c4c2"/>
<rect x="116" y="0" width="40" height="118" fill="#eff0ef"/>
<rect x="116" y="116" width="40" height="40" fill="#b3b0ae"/>
<g filter="url(#b1)">
<path d="M39 12l4 24M93 16l-2.500 15M42 28h50" stroke="#8a4a2f" stroke-width="3.200" fill="none"/>
<rect x="2" y="8" width="5.500" height="74" fill="#3b3340"/>
<path d="M146 24c-6 6-6 14 0 20M142 34l6 8" stroke="#555" stroke-width="1.300" fill="none"/>
</g>
<g filter="url(#b2)">
<!-- hair back -->
</g><g filter="url(#rg)">
<path d="M14 96c4-8 10-12 12-22c2-24 22-44 52-44c34 0 52 18 56 46c2 10 6 18 2 28c-4 10-10 16-18 18l-84 24c-10-6-14-18-16-30c-2-6-6-12-4-20z" fill="#48494c"/>
<path d="M30 60c10-22 40-30 70-22c20 6 30 22 32 40c-10-18-30-26-56-24c-20 0-36 4-46 6z" fill="#5c5d61"/>
<path d="M112 70c10 4 20 16 22 30M20 100c-4 6-8 8-12 8" stroke="#5a5b5f" stroke-width="3" fill="none"/><path d="M44 44c14-8 34-10 52-4M36 56c16-10 44-12 70-2M118 64c8 10 12 22 12 36" stroke="#77787c" stroke-width="2.200" fill="none" stroke-opacity=".7"/><path d="M22 96c0 14 4 26 12 36" stroke="#38383b" stroke-width="7" fill="none"/>
</g><g filter="url(#b2)">
<path d="M40 140l50 10l10 58h-60z" fill="#9a7060"/>
<!-- face -->
<path d="M34 92c0-18 14-28 38-28s38 10 38 30c0 22-4 40-14 52c-8 10-16 14-26 14s-20-6-27-18c-6-12-9-30-9-50z" fill="#b08478"/>
<ellipse cx="70" cy="118" rx="20" ry="16" fill="#bb8e82"/>
<!-- fringe -->
<path d="M32 84c4-14 20-22 42-22c20 0 34 6 38 20c-12-6-24-8-40-6c-16 0-28 2-40 8z" fill="#454041"/>
<!-- neck / chest -->
<path d="M44 150c8 10 20 14 30 12l12 46h-44z" fill="#a87c68"/>
<!-- clothes -->
<path d="M0 208v-74c8-10 18-14 30-12c6 6 10 16 14 28l4 58z" fill="#1b1b1f"/>
<path d="M156 208v-62c-8-4-18-6-26 0l-22 30l2 32z" fill="#1e1e23"/>
<!-- hand / arm -->
<path d="M76 208c-2-22 2-40 12-52c2-12 8-24 18-32c8-6 20-8 28-2c6 6 6 18 2 26c-6 10-14 16-20 22l-4 38z" fill="#c79a7e"/>
<path d="M104 122c8-6 22-6 30 0c-8-2-18 0-26 8z" fill="#b48468"/>
</g>
<g filter="url(#b1)">
<rect x="29.500" y="80" width="33.500" height="27" rx="8" fill="#9a8a60" fill-opacity=".72" stroke="#46302a" stroke-width="2.300"/>
<rect x="73" y="77.500" width="36" height="28" rx="8" fill="#a38c66" fill-opacity=".72" stroke="#46302a" stroke-width="2.300"/>
<path d="M62 87c4-2 8-2 11-1" stroke="#46302a" stroke-width="2.400" fill="none"/>
<path d="M40 95c4-1.500 8-1.500 12 0M84 93c4-1.500 8-1.500 12 0" stroke="#6a5040" stroke-width="2.200" stroke-opacity=".55" fill="none"/>
<path d="M57 129c7-3 15-3 24 0c-7 5-17 5-24 0z" fill="#b25a62"/>
<path d="M61 130h15" stroke="#d8c8c4" stroke-width="1.400"/>
<path d="M62 113c2 2.500 8 2.500 10 0" stroke="#996a60" stroke-width="1.600" stroke-opacity=".7" fill="none"/>
<g fill="#d5d7dc"><circle cx="140" cy="160" r="2"/><circle cx="147" cy="176" r="2.300"/><circle cx="134" cy="184" r="2"/><circle cx="144" cy="196" r="2.400"/><circle cx="126" cy="200" r="1.800"/><circle cx="150" cy="150" r="1.600"/><circle cx="14" cy="158" r="1.700"/><circle cx="26" cy="176" r="1.500"/><circle cx="9" cy="190" r="1.700"/><circle cx="20" cy="200" r="1.500"/><circle cx="34" cy="192" r="1.400"/><circle cx="6" cy="140" r="1.400"/></g>
</g>
</g></svg>
</div></div><div class="mic" style="background:#a8c7fa"><svg width="24" height="24" viewBox="0 0 24 24"><circle cx="6.500" cy="12" r="1.800" fill="#062e6f"/><circle cx="12" cy="12" r="1.800" fill="#062e6f"/><circle cx="17.500" cy="12" r="1.800" fill="#062e6f"/></svg></div><div class="nm" style="letter-spacing:0.337px">Andrea Perotti</div></div>
<div class="tile" style="left:1737px;top:202px;background:radial-gradient(ellipse 28% 30% at 55% 30%,rgba(125,92,58,.95),rgba(125,92,58,0) 100%),radial-gradient(ellipse 75% 32% at 50% 84%,rgba(208,190,138,1),rgba(208,190,138,0) 100%),radial-gradient(ellipse 40% 45% at 0% 20%,rgba(150,135,60,.9),rgba(150,135,60,0) 100%),linear-gradient(180deg,#857a3e 0%,#8d8044 30%,#9c8c55 55%,#b6a570 80%,#a89860 100%)"><div class="vig"></div><div class="avc"><svg width="72" height="72" viewBox="0 0 72 72"><defs><filter id="bj"><feGaussianBlur stdDeviation=".7"/></filter><clipPath id="cj"><circle cx="36" cy="36" r="36"/></clipPath></defs>
<g clip-path="url(#cj)"><rect width="72" height="72" fill="#d5c878"/>
<g filter="url(#bj)">
<path d="M4 0l8 72h-10zM20 0l4 72h-8zM50 0l8 72h-6zM64 0l6 72h-5z" fill="#e6c22c"/>
<path d="M24 0l-3 50h5zM36 0l-3 20h6zM46 0l-2 48h5zM61 30l-3 40h6zM14 20l-2 30h3z" fill="#5d8f99"/>
<path d="M28 0l2 50h4zM55 0l-2 60h3zM8 30l1 40h3z" fill="#c9d3b0"/>
<path d="M7 72c0-14 8-21 21-24l8-6l8 6c13 3 21 10 21 24z" fill="#efe9d2"/>
<path d="M30 40h12l-1 8l-5 12l-5-12z" fill="#c08c6a"/>
<ellipse cx="36.300" cy="26" rx="8.600" ry="11" fill="#c4926f"/>
<path d="M27.500 22c-1-8 3-11.500 9-11.500s10 3.500 8.500 11.500c-2-4-4-5-8.500-5s-7 1-9 5z" fill="#241c1c"/>
<path d="M28.300 29c2 2 4 1.500 8 1.500s6 .5 8-1.500c0 7-3 10-8 10s-8-3-8-10z" fill="#2a1f1d"/>
<path d="M33 31.500h6.500" stroke="#a06a5a" stroke-width="1.200"/>
<path d="M29 23.500h6.200v3.200h-6.200zM37.300 23.500h6.200v3.200h-6.200z" fill="none" stroke="#3a2c28" stroke-width=".9"/>
</g></g></svg></div><div class="mic" style="background:#444746"><svg width="24" height="24" viewBox="0 0 24 24" fill="none"><rect x="10.300" y="5.800" width="3.400" height="7.400" rx="1.700" fill="#dcdcdc"/><path d="M7.800 11.300a4.200 4.200 0 0 0 8.400 0M12 15.500v2.700" stroke="#dcdcdc" stroke-width="1.250"/><path d="M5.800 5.300l12.800 13" stroke="#444746" stroke-width="3"/><path d="M6.400 5.600l11.800 12" stroke="#dcdcdc" stroke-width="1.250"/></svg></div><div class="nm" style="letter-spacing:0.156px">João Cabral</div></div>
<div class="tile" style="left:1401px;top:422px;background:radial-gradient(ellipse 75% 65% at 50% 55%,#22709f 0%,#125e8e 55%,#05507c 100%)"><div class="avc" style="background:#0288d1;color:#fff;font-size:36px;line-height:72px;text-align:center">E</div><div class="mic" style="background:#06314d"><svg width="24" height="24" viewBox="0 0 24 24" fill="none"><rect x="10.300" y="5.800" width="3.400" height="7.400" rx="1.700" fill="#9fd4ff"/><path d="M7.800 11.300a4.200 4.200 0 0 0 8.400 0M12 15.500v2.700" stroke="#9fd4ff" stroke-width="1.250"/><path d="M5.800 5.300l12.800 13" stroke="#06314d" stroke-width="3"/><path d="M6.400 5.600l11.800 12" stroke="#9fd4ff" stroke-width="1.250"/></svg></div><div class="nm" style="letter-spacing:-0.489px">Elania CRAS</div></div>
<div class="tile" style="left:1569px;top:422px;background:radial-gradient(ellipse 75% 65% at 50% 55%,#8e3c9c 0%,#7e2a90 55%,#6e1a82 100%)"><div class="avc" style="background:#ab47bc;color:#fff;font-size:36px;line-height:72px;text-align:center;letter-spacing:-1px">VS</div><div class="mic" style="background:#4a0a5c"><svg width="24" height="24" viewBox="0 0 24 24" fill="none"><rect x="10.300" y="5.800" width="3.400" height="7.400" rx="1.700" fill="#f3b6ff"/><path d="M7.800 11.300a4.200 4.200 0 0 0 8.400 0M12 15.500v2.700" stroke="#f3b6ff" stroke-width="1.250"/><path d="M5.800 5.300l12.800 13" stroke="#4a0a5c" stroke-width="3"/><path d="M6.400 5.600l11.800 12" stroke="#f3b6ff" stroke-width="1.250"/></svg></div><div class="nm" style="letter-spacing:-0.645px">VS AGRESTIN...</div></div>
<div class="tile" style="left:1737px;top:422px;background:radial-gradient(ellipse 70% 30% at 75% 25%,rgba(130,78,58,.9),rgba(130,78,58,0) 100%),radial-gradient(ellipse 50% 40% at 20% 70%,rgba(140,80,50,.8),rgba(140,80,50,0) 100%),linear-gradient(180deg,#5e3526 0%,#74402b 30%,#7c4530 60%,#6e3e2c 100%)"><div class="vig" style="opacity:.6"></div><div class="avc"><svg width="72" height="72" viewBox="0 0 72 72"><defs><filter id="bp" x="-10%" y="-10%" width="120%" height="120%"><feGaussianBlur stdDeviation=".8"/></filter><clipPath id="cp"><circle cx="36" cy="36" r="36"/></clipPath></defs>
<g clip-path="url(#cp)"><rect width="72" height="72" fill="#7f8582"/>
<g filter="url(#bp)">
<rect x="18" y="0" width="34" height="10" fill="#59605c"/><rect x="35" y="0" width="6" height="6.500" fill="#f4f4f4"/>
<rect x="0" y="42" width="11" height="16" fill="#e3e6ee"/>
<path d="M62 14c8 6 12 16 10 32l-8 22l-16 6l-10-28z" fill="#2b2023"/>
<path d="M36 16c6-10 20-14 30-4c4 6 6 12 6 18l-8 0z" fill="#4a3532"/>
<ellipse cx="52" cy="33" rx="16" ry="22" fill="#c98f6e"/>
<path d="M36 24c2-10 14-16 26-10c-10 0-18 4-22 14z" fill="#4a3532"/>
<path d="M9 50h22l2 14h-26z" fill="#d3a088"/><ellipse cx="19" cy="38" rx="15.500" ry="19" fill="#dcab92"/>
<path d="M3 34c-3-18 6-29 20-29c10 0 16 8 13 20l-2 2c-4-3-8-3-14-2c-6 1-12 4-17 9z" fill="#47302d"/>
<path d="M4 24c6-4 20-6 30-.5l1 3.500c-10-3-20-2-30 2z" fill="#3a2624"/>
<path d="M6 58c6 6 18 7 27 0l22 5l-6 11h-40z" fill="#5b8fd9"/>
<path d="M35 50c3 6 5 12 5 22h-7c0-8 0-12-2-16z" fill="#5d4038"/>
<path d="M42.500 40c4 2.500 10 2.500 15-.5c-1.500 7-12 8.500-15 .5z" fill="#fbf6f2"/>
<path d="M13 44.500c3.500 2 8 2 12 0" stroke="#b87a6e" stroke-width="1.600" fill="none"/>
<path d="M10 34h5M23 34h5" stroke="#5a3a34" stroke-width="1.400"/><path d="M18 38v3" stroke="#c08e7a" stroke-width="1.500"/>
<rect x="39.500" y="21" width="14" height="12" rx="4.500" fill="none" stroke="#463436" stroke-width="1.700"/><rect x="56" y="26.500" width="11" height="12" rx="4.500" fill="none" stroke="#463436" stroke-width="1.700"/><path d="M53.500 27l2.500 2" stroke="#463436" stroke-width="1.500"/>
<g fill="#eef2fc"><circle cx="24" cy="67" r="1.200"/><circle cx="31" cy="64.500" r="1"/><circle cx="46" cy="64" r="1.200"/><circle cx="14" cy="61" r="1"/><circle cx="48" cy="69" r="1"/></g>
</g></g></svg></div><div class="mic" style="background:#5c1d08"><svg width="24" height="24" viewBox="0 0 24 24" fill="none"><rect x="10.300" y="5.800" width="3.400" height="7.400" rx="1.700" fill="#ffb59a"/><path d="M7.800 11.300a4.200 4.200 0 0 0 8.400 0M12 15.500v2.700" stroke="#ffb59a" stroke-width="1.250"/><path d="M5.800 5.300l12.800 13" stroke="#5c1d08" stroke-width="3"/><path d="M6.400 5.600l11.800 12" stroke="#ffb59a" stroke-width="1.250"/></svg></div><div class="nm" style="letter-spacing:0.136px">polyanna cam...</div></div>
<div class="tile" style="left:1401px;top:642px;background:radial-gradient(ellipse 75% 65% at 50% 55%,#2f6a22 0%,#245a18 55%,#1b4b11 100%)"><div class="avc" style="background:#346d20"></div><div class="abs" style="left:16.300px;top:82px;width:124px;height:43.500px;border-radius:22px;background:rgba(36,44,38,.8)">
<svg class="abs" style="left:8.700px;top:10px" width="24" height="24" viewBox="0 0 24 24" fill="none" stroke="#a9c4a5" stroke-width="1.700"><path d="M7 3.500h10M8.800 3.500v7.500l-2.600 3.300h11.600l-2.600-3.300v-7.500M12 14.500v6.500"/></svg>
<svg class="abs" style="left:46px;top:5px" width="32" height="34" viewBox="0 0 32 34" fill="none"><path d="M9.500 3v26.500h15" stroke="#7a7b82" stroke-width="3.600"/><path d="M14.500 9.500a2.300 2.300 0 0 1 4.600 0v4.500M22 14.500c0 3-2 5-5 5.200M17 20v3" stroke="#4f7c4a" stroke-width="1.600"/><path d="M7 8l19 18" stroke="#4f7c4a" stroke-width="2"/><path d="M9.500 11v5" stroke="#b5b5bb" stroke-width="3.600"/></svg>
<svg class="abs" style="left:92.700px;top:10px" width="24" height="24" viewBox="0 0 24 24" fill="#a9c4a5"><circle cx="12" cy="5.700" r="2.500"/><circle cx="12" cy="12" r="2.500"/><circle cx="12" cy="18.300" r="2.500"/></svg>
</div><div class="mic" style="background:#1a4a0e"><svg width="24" height="24" viewBox="0 0 24 24" fill="none"><rect x="10.300" y="5.800" width="3.400" height="7.400" rx="1.700" fill="#b7f0a4"/><path d="M7.800 11.300a4.200 4.200 0 0 0 8.400 0M12 15.500v2.700" stroke="#b7f0a4" stroke-width="1.250"/><path d="M5.800 5.300l12.800 13" stroke="#1a4a0e" stroke-width="3"/><path d="M6.400 5.600l11.800 12" stroke="#b7f0a4" stroke-width="1.250"/></svg></div><div class="nm" style="letter-spacing:-0.097px">LUCIANA DUT...</div></div>
<div class="tile" style="left:1569px;top:642px;background:#333538"><div class="abs" style="left:33.500px;top:61.500px"><svg width="48" height="48" viewBox="0 0 48 48"><defs><filter id="ba"><feGaussianBlur stdDeviation=".7"/></filter><clipPath id="ca"><circle cx="24" cy="24" r="23.500"/></clipPath></defs><g clip-path="url(#ca)"><rect width="48" height="48" fill="#b7b3bb"/><g filter="url(#ba)">
<path d="M4 30c-2-16 4-27 14-27c8 0 12 6 10 16c6 10 8 20 6 29h-26z" fill="#3a2420"/>
<ellipse cx="17" cy="19" rx="9" ry="12" fill="#c4866a"/><path d="M6 48c0-10 6-15 14-15s12 5 14 15z" fill="#b87e62"/>
<path d="M6 14c2-8 8-11 13-10c4 1 7 4 7 9c-6-4-12-4-20 1z" fill="#2a1a18"/>
<path d="M14 25c2 1.500 5 1.500 7 0c-2 2.500-5 2.500-7 0z" fill="#e53950" stroke="#e53950" stroke-width=".8"/>
</g></g></svg></div><div class="abs" style="left:75px;top:59.500px"><svg width="52" height="52" viewBox="0 0 52 52"><defs><filter id="bb"><feGaussianBlur stdDeviation=".7"/></filter><clipPath id="cb"><circle cx="26" cy="26" r="23.500"/></clipPath></defs><circle cx="26" cy="26" r="26" fill="#333538"/><g clip-path="url(#cb)"><rect width="52" height="52" fill="#e2e3e0"/><g filter="url(#bb)">
<rect x="2" y="28" width="12" height="14" fill="#4a4c50"/>
<path d="M14 38c-2-16 2-30 12-30s14 10 12 26c-2 6-6 6-12 6s-10 0-12-2z" fill="#3d2e2c"/>
<ellipse cx="26.500" cy="22" rx="7" ry="9" fill="#d3a088"/>
<path d="M9 52c0-12 4-18 10-20h14c6 2 10 8 10 20z" fill="#d0a088"/>
<path d="M14 52v-12c2-6 6-7 12-7s10 1 12 7v12z" fill="#1e9a4a"/>
<path d="M20.500 18.500h5v3h-5zM27.500 18.500h5v3h-5z" fill="none" stroke="#333" stroke-width=".9"/>
</g></g></svg></div><div class="abs nw gs" style="left:0;width:156px;top:123px;text-align:center;font-size:17px;line-height:24px;color:#e8eaed;letter-spacing:-0.572px">Mais 14 pessoas</div></div>
<div class="tile" style="left:1737px;top:642px;background:radial-gradient(ellipse 50% 35% at 15% 25%,rgba(125,120,130,.8),rgba(125,120,130,0) 100%),radial-gradient(ellipse 60% 35% at 90% 30%,rgba(70,110,110,.9),rgba(70,110,110,0) 100%),linear-gradient(180deg,#6a8486 0%,#5f7f86 35%,#6b8993 60%,#76919a 85%,#65828a 100%)"><div class="vig" style="opacity:.5"></div><div class="avc"><svg width="72" height="72" viewBox="0 0 72 72" fill="none"><circle cx="36" cy="36" r="36" fill="#fff"/>
<circle cx="16.200" cy="16.200" r="4.300" fill="#e8413c"/><circle cx="35.300" cy="13.600" r="4.500" fill="#2f55a4"/><circle cx="54.600" cy="16.200" r="4.300" fill="#2e9e48"/>
<path d="M7 20.500c2.500 8.200 15.500 8.200 18.500 .5" stroke="#c62828" stroke-width="4.300" stroke-linecap="round"/>
<path d="M26 18c2.500 8 15.500 8 18.500 0" stroke="#2a4a9a" stroke-width="4.300" stroke-linecap="round"/>
<path d="M45.500 21c3 7.700 16 7.700 18.500-.5" stroke="#2e9e48" stroke-width="4.300" stroke-linecap="round"/>
<path d="M12.500 29.500l21 3.800-15 6.500-4.500-1.500z" fill="#3d5fa8"/><path d="M14.500 32.300l14 2M15.500 34.800l10 .8M16.500 37.200l6-.8" stroke="#fff" stroke-width=".8"/>
<path d="M59.500 29.500l-21 3.800 15 6.500 4.500-1.500z" fill="#3d5fa8"/><path d="M57.500 32.300l-14 2M56.500 34.800l-10 .8M55.500 37.200l-6-.8" stroke="#fff" stroke-width=".8"/>
<text x="36" y="51.700" text-anchor="middle" font-family="Liberation Sans" font-weight="700" font-size="8.800" fill="#2a4a9a" stroke="#2a4a9a" stroke-width=".35" textLength="60.500" lengthAdjust="spacingAndGlyphs">ESFOSUAS/PE</text>
<path d="M11.500 55.200h48.500M12.500 58.200h46M26 61.300h18" stroke="#8a96b0" stroke-width="1.200" stroke-dasharray="2.600 .5"/></svg></div><div class="mic" style="background:#06333b"><svg width="24" height="24" viewBox="0 0 24 24" fill="none"><rect x="10.300" y="5.800" width="3.400" height="7.400" rx="1.700" fill="#8ee7f5"/><path d="M7.800 11.300a4.200 4.200 0 0 0 8.400 0M12 15.500v2.700" stroke="#8ee7f5" stroke-width="1.250"/><path d="M5.800 5.300l12.800 13" stroke="#06333b" stroke-width="3"/><path d="M6.400 5.600l11.800 12" stroke="#8ee7f5" stroke-width="1.250"/></svg></div><div class="nm" style="letter-spacing:-0.552px">PROJETO DE ...</div></div>

</div>
<!-- BOTTOM -->
<div id="bottom">
<div class="bt gs" style="left:13px;letter-spacing:-0.409px">16:36</div>
<div class="abs" style="left:63px;top:1022px;width:1px;height:16px;background:#c4c7c5"></div>
<div class="bt gs" style="left:76px;letter-spacing:0.192px">AULA 02 - 03/07/2025 - Tarde .Turma 01 Curso 08:A...</div>
<div class="abs" style="left:667px;top:1006px;width:88px;height:48px;border-radius:13px;background:#5c1510"></div>
<div class="abs" style="left:707px;top:1006px;width:48px;height:48px;border-radius:12px;background:#c99a96"></div>
<svg class="abs" style="left:683.0px;top:1025.0px" width="14" height="10" viewBox="0 0 14 10" fill="none" ><path d="M2.200 7.500l4.800-4.800 4.800 4.800" stroke="#fde4e1" stroke-width="2"/></svg>
<svg class="abs" style="left:719.0px;top:1018.5px" width="24" height="24" viewBox="0 0 24 24" fill="none" ><g transform="translate(12 12) scale(1.17) translate(-12 -12)"><rect x="10.200" y="4" width="3.600" height="9" rx="1.800" stroke="#6b2d29" stroke-width="1.650"/><path d="M7 11.500a5 5 0 0 0 10 0M12 16.500v3.500" stroke="#6b2d29" stroke-width="1.650"/><path d="M4.500 3.800l15.500 16" stroke="#c99a96" stroke-width="3.600"/><path d="M4.800 4.300l14.800 15.200" stroke="#6b2d29" stroke-width="1.750"/></g></svg>
<div class="abs" style="left:739px;top:1002px;width:20px;height:20px;border-radius:50%;background:#fdd770;color:#7a5b14;font-size:12.500px;font-weight:700;line-height:20px;text-align:center">!</div>
<div class="abs" style="left:763px;top:1006px;width:88px;height:48px;border-radius:13px;background:#5c1510"></div>
<div class="abs" style="left:803px;top:1006px;width:48px;height:48px;border-radius:12px;background:#c99a96"></div>
<svg class="abs" style="left:779.0px;top:1025.0px" width="14" height="10" viewBox="0 0 14 10" fill="none" ><path d="M2.200 7.500l4.800-4.800 4.800 4.800" stroke="#fde4e1" stroke-width="2"/></svg>
<svg class="abs" style="left:815.0px;top:1018.5px" width="24" height="24" viewBox="0 0 24 24" fill="none" ><g transform="translate(12 12) scale(1.17) translate(-12 -12)"><path d="M4 6.500h10.500a1 1 0 0 1 1 1v9a1 1 0 0 1-1 1h-10.500a1 1 0 0 1-1-1v-9a1 1 0 0 1 1-1z" stroke="#6b2d29" stroke-width="1.750"/><path d="M15.500 10.500l5-3.500v10l-5-3.500z" fill="#6b2d29"/><path d="M2.500 3.200l17.500 18" stroke="#c99a96" stroke-width="3.600"/><path d="M3 3.800l16.600 17" stroke="#6b2d29" stroke-width="1.750"/></g></svg>
<div class="abs" style="left:835px;top:1002px;width:20px;height:20px;border-radius:50%;background:#fdd770;color:#7a5b14;font-size:12.500px;font-weight:700;line-height:20px;text-align:center">!</div>
<div class="bb" style="left:859px;width:56px;background:#333537"></div>
<svg class="abs" style="left:875.0px;top:1018.0px" width="24" height="24" viewBox="0 0 24 24" fill="none" ><rect x="2.900" y="4.100" width="18.400" height="12.400" rx="1" stroke="#e8e8e8" stroke-width="2.200"/><path d="M.5 20h23" stroke="#e8e8e8" stroke-width="2"/><path d="M12 14.700v-4.500" stroke="#e8e8e8" stroke-width="2.100"/><path d="M7.700 11.600l4.300-3.900 4.300 3.900z" fill="#e8e8e8"/></svg>
<div class="bb" style="left:923px;width:56px;background:#333537"></div>
<svg class="abs" style="left:939.0px;top:1018.0px" width="24" height="24" viewBox="0 0 24 24" fill="none" ><circle cx="12" cy="11.900" r="9.400" stroke="#e8e8e8" stroke-width="2.200"/><circle cx="8.200" cy="9" r="1.600" fill="#e8e8e8"/><circle cx="15.800" cy="9" r="1.600" fill="#e8e8e8"/><path d="M5.900 13.500h12.200c-.6 3-3 4.900-6.100 4.900s-5.500-1.900-6.100-4.900z" fill="#e8e8e8"/></svg>
<div class="bb" style="left:987px;width:56px;background:#333537"></div>
<svg class="abs" style="left:1003.0px;top:1018.0px" width="24" height="24" viewBox="0 0 24 24" fill="none" ><rect x="3.600" y="4.900" width="17" height="14" rx="1" stroke="#e8e8e8" stroke-width="2.300"/><path d="M10.400 10.100h-3.400v3.800h3.400M17.200 10.100h-3.400v3.800h3.400" stroke="#e8e8e8" stroke-width="1.900"/></svg>
<div class="bb" style="left:1051px;width:56px;background:#333537"></div>
<svg class="abs" style="left:1067.0px;top:1018.0px" width="24" height="24" viewBox="0 0 24 24" fill="none" ><g transform="translate(13.300 12.300) scale(1.330) translate(-12 -12)"><path d="M7.500 12.500v-6.500a1.100 1.100 0 0 1 2.200 0v5M9.700 11v-7a1.100 1.100 0 0 1 2.200 0v7M11.900 11v-6.200a1.100 1.100 0 0 1 2.200 0v6.700M14.100 11.500v-4.500a1.100 1.100 0 0 1 2.200 0v8c0 3.500-2 6-5.300 6c-2.600 0-4-1.200-5-3.200l-2.600-5c-.5-1 .8-1.800 1.600-1l2.500 2.700" stroke="#e8e8e8" stroke-width="1.650" stroke-linejoin="round"/></g></svg>
<div class="bb" style="left:1115px;width:36px;background:#333537"></div>
<svg class="abs" style="left:1121.0px;top:1018.0px" width="24" height="24" viewBox="0 0 24 24" fill="none" ><circle cx="12" cy="6.100" r="2.300" fill="#e8e8e8"/><circle cx="12" cy="12" r="2.300" fill="#e8e8e8"/><circle cx="12" cy="17.900" r="2.300" fill="#e8e8e8"/></svg>
<div class="bb" style="left:1159px;width:72px;background:#dc362e"></div>
<svg class="abs" style="left:1183.0px;top:1018.0px" width="24" height="24" viewBox="0 0 24 24" fill="none" ><g transform="translate(12 12.300) scale(1.180) translate(-12 -12.500)"><path d="M12 9.500c-3.500 0-6.800 1-9.500 3.200-.6.500-.6 1.300-.1 1.800l1.700 1.700c.4.400 1 .5 1.500.2l2.300-1.500c.4-.3.600-.7.600-1.100v-1.600c1.100-.3 2.300-.500 3.500-.500s2.400.2 3.500.500v1.600c0 .4.200.8.600 1.100l2.300 1.500c.5.300 1.100.2 1.500-.2l1.700-1.700c.5-.5.500-1.300-.1-1.800-2.700-2.200-6-3.200-9.500-3.200z" fill="#fff"/><path d="M4.300 14.100l2.100-1.400M19.700 14.100l-2.100-1.400" stroke="#dc362e" stroke-width="1.200"/></g></svg>
<svg class="abs" style="left:1668.7px;top:1018px" width="24" height="24" viewBox="0 0 24 24" fill="none"><circle cx="12" cy="12" r="8.700" stroke="#fff" stroke-width="2.300"/><path d="M12 11v5.800" stroke="#fff" stroke-width="2.300"/><circle cx="12" cy="7.700" r="1.350" fill="#fff"/></svg>
<svg class="abs" style="left:1716px;top:1018px" width="26" height="24" viewBox="0 0 26 24" fill="none"><circle cx="16.700" cy="8.200" r="4.100" fill="#fff"/><circle cx="10.200" cy="8" r="5.900" fill="#131314"/><circle cx="10.200" cy="8" r="3.300" stroke="#fff" stroke-width="2.500"/><path d="M18.800 13.100c3.400.5 5.900 2 5.900 4.400v2.600h-4.400v-2.600c0-1.800-.5-3.200-1.500-4.400z" fill="#fff"/><path d="M2.500 18.900v-1.400c0-2.600 3.600-4 7.700-4s7.700 1.400 7.700 4v1.400z" stroke="#fff" stroke-width="2.400" stroke-linejoin="round"/></svg>
<div class="abs" style="left:1730px;top:997px;width:28px;height:20px;border-radius:10px;background:#5f6368;color:#fff;font-size:12px;line-height:20.500px;text-align:center;-webkit-text-stroke:.5px #fff;letter-spacing:.2px">23</div>
<svg class="abs" style="left:1765.15px;top:1018.5px" width="24" height="24" viewBox="0 0 24 24" fill="none"><path d="M2.700 2.800h18.600v13.400h-14.800l-3.800 3.800z" stroke="#fff" stroke-width="2.500" stroke-linejoin="miter"/><path d="M6 6.400h12.200M6 9.500h12.200M6 12.600h8.200" stroke="#fff" stroke-width="1.900"/></svg>
<div class="abs" style="left:1780.400px;top:1010.400px;width:11.200px;height:11.200px;border-radius:50%;background:#8ab4f8;border:1.500px solid #131314"></div>
<svg class="abs" style="left:1813px;top:1018px" width="24" height="24" viewBox="0 0 24 24" fill="none"><circle cx="5.9" cy="6.1" r="2.250" fill="#fff"/><circle cx="5.9" cy="12.05" r="2.250" fill="#fff"/><circle cx="5.9" cy="18.0" r="2.250" fill="#fff"/><circle cx="11.95" cy="6.1" r="2.250" fill="#fff"/><circle cx="11.95" cy="12.05" r="2.250" fill="#fff"/><circle cx="11.95" cy="18.0" r="2.250" fill="#fff"/><circle cx="18.0" cy="6.1" r="2.250" fill="#fff"/><circle cx="18.0" cy="12.05" r="2.250" fill="#fff"/><circle cx="18.0" cy="18.0" r="2.250" fill="#fff"/></svg>
<svg class="abs" style="left:1862px;top:1016px" width="24" height="28" viewBox="0 0 24 28" fill="none"><path d="M7.200 11.500v-3.800a4.100 4.100 0 0 1 8.200 0v3.800" stroke="#fff" stroke-width="2.500"/><path d="M12 22.700h-8v-11.200h14v3" stroke="#fff" stroke-width="2.600" stroke-linejoin="round"/><circle cx="17.100" cy="20" r="6.500" fill="#131314"/><circle cx="17.100" cy="20" r="5.300" fill="#fff"/><circle cx="17.100" cy="18.200" r="1.350" fill="#131314"/><path d="M14.300 22.100c.6-1.100 1.600-1.600 2.800-1.600s2.200.5 2.800 1.600c-.7.800-1.700 1.200-2.800 1.200s-2.100-.4-2.800-1.200z" fill="#131314"/></svg>

</div>
</body>
</html>
